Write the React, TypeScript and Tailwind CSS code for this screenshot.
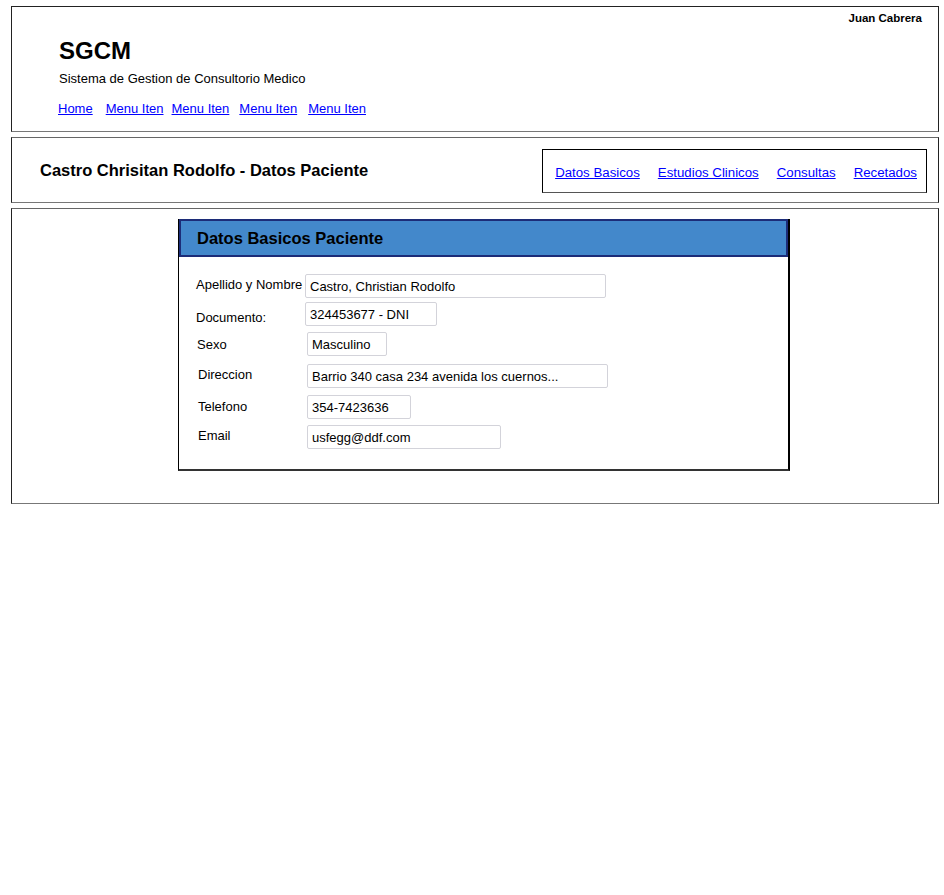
import React from 'react';

const menu = [
  { label: 'Home', ml: 'ml-[-1px]' },
  { label: 'Menu Iten', ml: 'ml-[13px]' },
  { label: 'Menu Iten', ml: 'ml-[8px]' },
  { label: 'Menu Iten', ml: 'ml-[10px]' },
  { label: 'Menu Iten', ml: 'ml-[11px]' },
];

const tabs = ['Datos Basicos', 'Estudios Clinicos', 'Consultas', 'Recetados'];

// row gap, label x/y nudge, input x and width
const fields = [
  { label: 'Apellido y Nombre', value: 'Castro, Christian Rodolfo', row: 'mt-0', lx: 'ml-0', lt: 'mt-[3px]', ix: 'ml-[1px]', w: 'w-[301px]' },
  { label: 'Documento:', value: '324453677 - DNI', row: 'mt-[4px]', lx: 'ml-0', lt: 'mt-[8px]', ix: 'ml-[1px]', w: 'w-[132px]' },
  { label: 'Sexo', value: 'Masculino', row: 'mt-[6px]', lx: 'ml-[1px]', lt: 'mt-[5px]', ix: 'ml-[2px]', w: 'w-[80px]' },
  { label: 'Direccion', value: 'Barrio 340 casa 234 avenida los cuernos...', row: 'mt-[8px]', lx: 'ml-[2px]', lt: 'mt-[3px]', ix: 'ml-[1px]', w: 'w-[301px]' },
  { label: 'Telefono', value: '354-7423636', row: 'mt-[7px]', lx: 'ml-[2px]', lt: 'mt-[4px]', ix: 'ml-[1px]', w: 'w-[104px]' },
  { label: 'Email', value: 'usfegg@ddf.com', row: 'mt-[6px]', lx: 'ml-[2px]', lt: 'mt-[3px]', ix: 'ml-[1px]', w: 'w-[194px]' },
];

const App = () => {
  return (
    <div className="w-[944px] h-[895px] bg-white text-black font-['Liberation_Sans',Arial,sans-serif]">
      <div className="pt-[6px] pl-[11px] w-[939px] flex flex-col gap-[5px]">
        {/* header */}
        <div className="h-[126px] border border-[#222] border-b-[#777] pl-[47px] pr-[16px] pt-[5px]">
          <div className="text-right text-[11.5px] leading-[13px] font-bold">Juan Cabrera</div>
          <div className="mt-[12px] text-[24px] leading-[28px] font-bold">SGCM</div>
          <div className="mt-[6px] text-[13px] leading-[16px]">Sistema de Gestion de Consultorio Medico</div>
          <div className="mt-[14px] flex text-[13px] leading-[16px]">
            {menu.map((m, i) => (
              <a key={i} href="#" className={`${m.ml} text-[#0000ff] underline`}>
                {m.label}
              </a>
            ))}
          </div>
        </div>

        {/* patient title + tabs */}
        <div className="h-[66px] border border-[#222] border-t-[#666] border-b-[#777] flex items-center justify-between pl-[28px] pr-[11px]">
          <h1 className="text-[16.5px] leading-[20px] font-bold">Castro Chrisitan Rodolfo - Datos Paciente</h1>
          <div className="mt-[2px] h-[44px] border border-black border-b-[#555] flex items-center gap-[18px] pl-[12px] pr-[9px] pt-[4px] text-[13.25px]">
            {tabs.map((t) => (
              <a key={t} href="#" className="text-[#0000ff] underline leading-[16px]">
                {t}
              </a>
            ))}
          </div>
        </div>

        {/* content */}
        <div className="h-[296px] border border-[#222] border-t-[#666] border-b-[#777] pt-[10px] pl-[166px]">
          <div className="w-[612px] border-l border-b-2 border-r-[2px] border-black border-b-[#333]">
            <div className="h-[38px] bg-[#4388cb] border-2 border-[#1c2c78] flex items-center pl-[16px]">
              <h2 className="text-[16.5px] leading-[20px] font-bold">Datos Basicos Paciente</h2>
            </div>
            <div className="pt-[17px] pb-[20px] pl-[17px]">
              {fields.map((f) => (
                <div key={f.label} className={`${f.row} flex items-start h-[24px]`}>
                  <div className={`${f.lx} ${f.lt} w-[108px] shrink-0 text-[13px] leading-[16px] whitespace-nowrap`}>
                    {f.label}
                  </div>
                  <div
                    className={`${f.w} ${f.ix} h-[24px] border border-[#d3d3da] rounded-[2px] flex items-center pl-[4px] pt-[1px] text-[13px] leading-[16px] whitespace-nowrap overflow-hidden`}
                  >
                    {f.value}
                  </div>
                </div>
              ))}
            </div>
          </div>
        </div>
      </div>
    </div>
  );
};

export default App;
